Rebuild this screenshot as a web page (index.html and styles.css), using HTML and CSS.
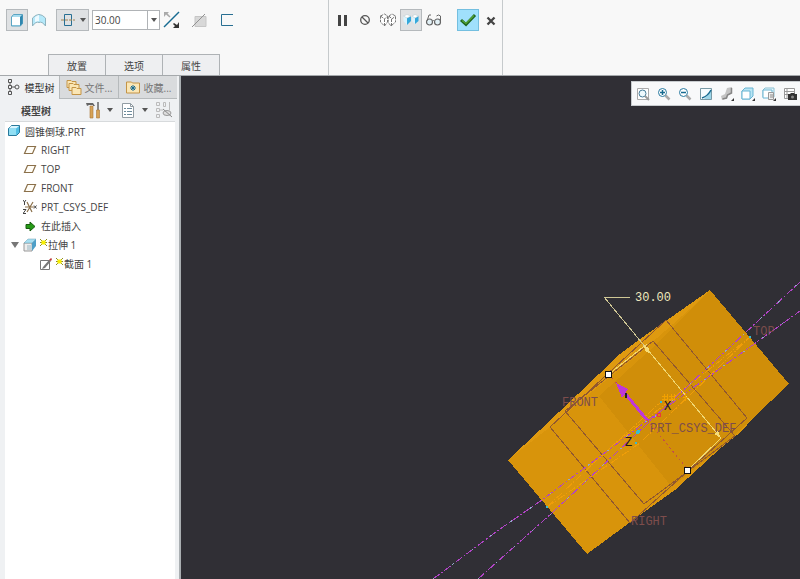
FILE: index.html
```html
<!DOCTYPE html>
<html lang="zh-CN">
<head>
    <meta charset="UTF-8">
    <meta name="viewport" content="width=device-width, initial-scale=1.0">
    <title>圆锥倒球.PRT</title>
    <link rel="stylesheet" href="styles.css">
</head>
<body>

<!-- Dashboard -->
<header class="dashboard">
    <div class="feature-panel">
        <div class="feature-tools">
            <button class="tool active" aria-label="Solid">
                <svg width="16" height="16" viewBox="0 0 16 16"><path d="M2.500 5l2-2.500h9v9l-2 2.500h-9z" fill="#a8dcef" stroke="#5ba4c2"/><path d="M3 5h8v8H3z" fill="#fff"/><path d="M11 5l2.500-2.500v9L11 14z" fill="#2f86ae"/></svg>
            </button>
            <button class="tool" aria-label="Surface">
                <svg width="16" height="16" viewBox="0 0 16 16"><path d="M1.500 6Q8-1 14.500 6v8Q11 9 8 10.500 5 9 1.500 14z" fill="#b5e9fa" stroke="#8fb3bf"/><path d="M4 5.500Q6 3 8 3v6Q6 9 4 10z" fill="#eefaff"/></svg>
            </button>
            <button class="tool split active" aria-label="Depth">
                <svg width="16" height="16" viewBox="0 0 16 16"><path d="M4.500 2.500h7v11h-7z" fill="none" stroke="#276f93"/><path d="M1 8h14" stroke="#a28554" stroke-dasharray="3 1"/></svg>
                <i class="caret"></i>
            </button>
            <div class="depth">
                <input class="depth-value" type="text" value="30.00" aria-label="Depth value">
                <button class="depth-drop" aria-label="Recent values"><i class="caret"></i></button>
            </div>
            <button class="tool" aria-label="Flip direction">
                <svg width="20" height="20" viewBox="0 0 20 20"><path d="M3 17L18 2" stroke="#176b91" stroke-width="1.500"/><path d="M3 7V2h5L6.500 3.500l3 3-1 1-3.500-3z" fill="#aaa"/><path d="M18 12v6h-6l2-2-2-2 1-1 3 2z" fill="#333"/></svg>
            </button>
            <button class="tool remove" aria-label="Remove material">
                <svg width="18" height="18" viewBox="0 0 18 18"><path d="M5 5.500h11v10H5z" fill="#d8d8d8" stroke="#c6c6c6"/><path d="M2 16L15 3" stroke="#929292"/></svg>
            </button>
            <button class="tool" aria-label="Thicken">
                <svg width="16" height="16" viewBox="0 0 16 16"><path d="M14 2.500H2.500v11H14" fill="none" stroke="#286f92"/></svg>
            </button>
        </div>
        <nav class="panel-tabs">
            <button class="panel-tab">放置</button>
            <button class="panel-tab">选项</button>
            <button class="panel-tab">属性</button>
        </nav>
    </div>
    <div class="run-panel">
        <button class="tool" aria-label="Pause">
            <svg width="16" height="16" viewBox="0 0 16 16"><path d="M4 3h3v11H4zM10 3h3v11h-3z" fill="#444"/></svg>
        </button>
        <button class="tool" aria-label="No preview">
            <svg width="16" height="16" viewBox="0 0 16 16"><circle cx="8" cy="8" r="4.300" fill="none" stroke="#555" stroke-width="1.300"/><path d="M5 5l6 6" stroke="#555" stroke-width="1.300"/></svg>
        </button>
        <button class="tool" aria-label="Unattached preview">
            <svg width="18" height="16" viewBox="0 0 18 16"><g fill="#fff" stroke="#777" stroke-dasharray="3 1"><path d="M1.500 4l4-2 3 2v6l-3 4-4-4z"/><path d="M1.500 4l4 3 3-3M5.500 7v7"/><path d="M10 4l3-2 3.500 2v6L12 14l-3-4zM10 4l3 3 3.500-3M12.500 7v7"/></g></svg>
        </button>
        <button class="tool active" aria-label="Attached preview">
            <svg width="18" height="16" viewBox="0 0 18 16"><path d="M1.500 4v5L5 13V6zM10 4v5l3 3V6z" fill="#d9f3fd"/><path d="M5 6l4-2v5l-4 4zM13 6l3.500-2v5L13 12z" fill="#35a8db"/><path d="M1.500 4L5 2.500 9 4 5 6zM10 4l3-1.500L16.500 4 13 6z" fill="#fff" stroke="#b5c6cd" stroke-width=".5"/></svg>
        </button>
        <button class="tool" aria-label="Verify">
            <svg width="18" height="16" viewBox="0 0 18 16"><g fill="#e2f1f7" stroke="#666" stroke-width="1.200"><circle cx="4.500" cy="10" r="3"/><circle cx="12.500" cy="10" r="3"/></g><path d="M2 9l2-6 2 0M7.500 9q1-1 2 0M15.500 10V4l-2-1-2 1" fill="none" stroke="#666"/></svg>
        </button>
        <button class="tool accept" aria-label="Accept">
            <svg width="18" height="18" viewBox="0 0 18 18"><path d="M2 9l5 4.500L16 4" fill="none" stroke="#1e651e" stroke-width="3"/><path d="M3 9.500l4 3L15 4.500" fill="none" stroke="#57a735" stroke-width="1.200"/></svg>
        </button>
        <button class="tool" aria-label="Cancel">
            <svg width="16" height="16" viewBox="0 0 16 16"><path d="M4.500 5.500l7 7M11.500 5.500l-7 7" stroke="#444" stroke-width="2.300"/></svg>
        </button>
    </div>
</header>

<main class="workspace">
    <!-- Model tree -->
    <aside class="navigator">
        <nav class="nav-tabs">
            <button class="nav-tab selected">
                <svg width="16" height="16" viewBox="0 0 16 16"><g fill="none" stroke="#555"><path d="M2.500 .5h3v3h-3zM2.500 6.500h3v3h-3zM2.500 12.500h3v3h-3zM5.500 8H9M4 3.500v3M4 9.500v3"/><circle cx="11" cy="8" r="2"/></g></svg>
                模型树
            </button>
            <button class="nav-tab">
                <svg width="16" height="16" viewBox="0 0 16 16"><g fill="#fae6b5" stroke="#c49446"><path d="M1 1.500h4l1 1h4v6H1z"/><path d="M3 4.500h4l1 1h5v6H3z"/><path d="M6 8.500h4l1 1h4v6H6z"/></g></svg>
                文件...
            </button>
            <button class="nav-tab">
                <svg width="16" height="16" viewBox="0 0 16 16"><path d="M1.500 3h5l1 1h7v10h-13z" fill="#fae6b5" stroke="#c49446"/><path d="M8 6v6M5 9h6M6 7l4 4M10 7l-4 4" stroke="#176b91"/></svg>
                收藏...
            </button>
        </nav>
        <div class="tree-bar">
            <h2 class="tree-title">模型树</h2>
            <button class="bar-tool" aria-label="Settings">
                <svg width="16" height="18" viewBox="0 0 16 18"><path d="M1 2h7l2 3H8V4H4L2 5z" fill="#666"/><path d="M5 5h3v12H5z" fill="#d7a357" stroke="#a87536" stroke-width=".6"/><path d="M12 1h2v8h-2z" fill="#888"/><path d="M11.500 9h3v8h-3z" fill="#d7a357" stroke="#a87536" stroke-width=".6"/></svg>
                <i class="caret"></i>
            </button>
            <button class="bar-tool" aria-label="Show">
                <svg width="16" height="18" viewBox="0 0 16 18"><path d="M2.500 2.500h8l3 3v11h-11z" fill="#fff" stroke="#919ca3"/><path d="M10.500 2.500v3h3" fill="none" stroke="#919ca3"/><path d="M4 7.500h2M7 7.500h5M4 10.500h2M7 10.500h5M4 13.500h2M7 13.500h5" stroke="#6c8b9c"/></svg>
                <i class="caret"></i>
            </button>
            <button class="bar-tool" aria-label="Tree filter">
                <svg width="18" height="18" viewBox="0 0 18 18"><g fill="none" stroke="#bbb"><path d="M1.500 1.500h3v3h-3zM1.500 7.500h3v3h-3zM1.500 13.500h3v3h-3zM5 9h3M8.500 1.500h2v4h-2zM14.500 1v8"/></g><ellipse cx="12" cy="12" rx="4" ry="2.500" fill="#ddd" stroke="#999"/><path d="M8 8l9 8" stroke="#888"/></svg>
            </button>
        </div>
        <ul class="tree">
            <li class="node root">
                <svg width="14" height="14" viewBox="0 0 14 14"><path d="M1.500 4.500l3-3h8v7l-3 3h-8z" fill="#52bfe5" stroke="#28789b"/><path d="M2 5h7v6H2z" fill="#91dff4"/><path d="M4 2h8L9 4.500H2z" fill="#d9f6ff"/></svg>
                圆锥倒球.PRT
            </li>
            <li class="node">
                <svg width="14" height="14" viewBox="0 0 14 14"><path d="M4.500 3.500h8l-3 7h-8z" fill="#fffdf7" stroke="#8b704a" stroke-width="1.200"/></svg>
                RIGHT
            </li>
            <li class="node">
                <svg width="14" height="14" viewBox="0 0 14 14"><path d="M4.500 3.500h8l-3 7h-8z" fill="#fffdf7" stroke="#8b704a" stroke-width="1.200"/></svg>
                TOP
            </li>
            <li class="node">
                <svg width="14" height="14" viewBox="0 0 14 14"><path d="M4.500 3.500h8l-3 7h-8z" fill="#fffdf7" stroke="#8b704a" stroke-width="1.200"/></svg>
                FRONT
            </li>
            <li class="node">
                <svg width="14" height="14" viewBox="0 0 14 14"><path d="M2 7h9M4 2l5 10M10 2L4 12" stroke="#8b704a" stroke-width="1.200"/><path d="M0 0l1.500 2L3 0M1.500 2v3M0 9.500h3l-3 4h3M11 5.500l2.500 3M13.500 5.500l-2.500 3" fill="none" stroke="#444"/></svg>
                PRT_CSYS_DEF
            </li>
            <li class="node">
                <svg width="14" height="14" viewBox="0 0 14 14"><path d="M3 5.500h4V3l5 4.500L7 12V9.500H3z" fill="#269b17" stroke="#175d0e"/></svg>
                在此插入
            </li>
            <li class="node feature">
                <button class="toggle" aria-label="Collapse"></button>
                <svg width="14" height="14" viewBox="0 0 14 14"><path d="M1 5h8v8H1z" fill="#eee" stroke="#999"/><path d="M1 5l4-4h8L9 5z" fill="#a7dff2" stroke="#6a9db0" stroke-width=".5"/><path d="M9 5l4-4v7l-4 5z" fill="#4d9fc8"/><path d="M4 7h5v5H4z" fill="#c3d2d8"/></svg>
                <svg class="regen" width="7" height="7" viewBox="0 0 7 7"><path d="M0 0l7 7M7 0L0 7M0 3.500h7" stroke="#8d8c22"/><path d="M1.500 1.500h4v4h-4z" fill="#f7ef00"/></svg>
                拉伸 1
            </li>
            <li class="node section">
                <svg width="14" height="14" viewBox="0 0 14 14"><path d="M1.500 3.500h9v9h-9z" fill="#fff" stroke="#777"/><path d="M4 10l6-7 2 1-6 7-3 1z" fill="#777"/><path d="M10 3l2-2 1 1-1 2z" fill="#bd3535"/></svg>
                <svg class="regen" width="7" height="7" viewBox="0 0 7 7"><path d="M0 0l7 7M7 0L0 7M0 3.500h7" stroke="#8d8c22"/><path d="M1.500 1.500h4v4h-4z" fill="#f7ef00"/></svg>
                截面 1
            </li>
        </ul>
    </aside>

    <!-- Graphics window -->
    <section class="viewport">
        <svg class="scene" viewBox="181 76 619 503" preserveAspectRatio="xMinYMin slice" shape-rendering="crispEdges">
            <path d="M508 460L540 430 578 394 620 354 640 339 710 290 789 384 752 419 700 467 675 490 640 515 587 554z" fill="#d8940b"/>
            <path d="M599 396L650 350 710 290 789 384 752 419 700 467 671 486z" fill="#d08e09"/>
            <path d="M508 460L540 430 578 394 620 354 640 339 710 290 690 309 640 353 599 386 550 427z" fill="#df9a10"/>
            <path d="M640 515L675 490 700 467 752 419 742 431 688 474 645 510z" fill="#db960d"/>
            <!-- datum planes -->
            <g class="datum">
                <path d="M666 320L747 418 630 523 550 427z"/>
                <path d="M653 341L735 436 644 504 565 411z"/>
            </g>
            <g class="hidden-edge">
                <path d="M547 507L610 448 750 337M547 507L640 443 750 337M590 466L661 402M690 395L750 337"/>
            </g>
            <g class="axis">
                <path d="M433 579L500 529 542 500 647 421 800 311"/>
                <path d="M478 579L552 513 648 423 800 282"/>
            </g>
            <g class="axis-dots">
                <path d="M433 579L500 529 542 500 647 421 800 311"/>
                <path d="M478 579L552 513 648 423 800 282"/>
            </g>
            <!-- labels -->
            <g class="datum-label">
                <text x="562" y="406">FRONT</text>
                <text x="753" y="335">TOP</text>
                <text x="631" y="525">RIGHT</text>
                <text x="650" y="432">PRT_CSYS_DEF</text>
            </g>
            <!-- depth dimension -->
            <path d="M630 297H604L647 349" fill="none" stroke="#cfc795"/>
            <path d="M647 349L721 438 688 470M609 374L647 344" fill="none" stroke="#f0d873"/>
            <path d="M644 345l5 3v5l-4-2zM721 438l-7-4 4-3z" fill="#f6dc79"/>
            <text class="dim-label" x="635" y="301">30.00</text>
            <path d="M609 374l39 47 40 49" fill="none" stroke="#c34f49" stroke-dasharray="2 3"/>
            <path d="M647 420L623 391" stroke="#bf38d8" stroke-width="3"/>
            <path d="M616 383l12 6-2 3-4 6z" fill="#bf38d8"/>
            <g fill="none" stroke="#f2a100">
                <path d="M664.500 394v7M667.500 394v7M671.500 394v7M674.500 394v7M662 396.500h6M669 396.500h6M662 399.500h6M669 399.500h6M685.500 393v8M683 397.500h5"/>
            </g>
            <text class="axis-label" x="664" y="410">X</text>
            <text class="axis-label" x="625" y="446">Z</text>
            <path d="M626 393v5" stroke="#222" stroke-width="2"/>
            <g fill="#38bbd2"><circle cx="638" cy="432" r="2"/><circle cx="636" cy="443" r="1"/><circle cx="661" cy="402" r="1"/><circle cx="750" cy="337" r="1"/><circle cx="547" cy="507" r="1"/></g>
            <circle cx="659" cy="415" r="2" fill="none" stroke="#ed3838"/>
            <g fill="#fff" stroke="#111"><path d="M605.500 371.500h6v6h-6zM684.500 467.500h6v6h-6z"/></g>
        </svg>
        <div class="view-tools">
            <button class="view-tool" aria-label="Refit"><svg width="16" height="16" viewBox="0 0 16 16"><path d="M2.500 2.500h11v11h-11z" fill="#fff" stroke="#aaa"/><circle cx="7.500" cy="7.500" r="3.500" fill="#eef9fd" stroke="#477d99"/><path d="M10 10l4 4" stroke="#999" stroke-width="2"/></svg></button>
            <button class="view-tool" aria-label="Zoom in"><svg width="16" height="16" viewBox="0 0 16 16"><circle cx="6.500" cy="6.500" r="4" fill="#fff" stroke="#287aa0"/><path d="M4 6.500h5M6.500 4v5" stroke="#176b91" stroke-width="1.500"/><path d="M9.500 9.500l4 4" stroke="#aaa" stroke-width="2.500"/></svg></button>
            <button class="view-tool" aria-label="Zoom out"><svg width="16" height="16" viewBox="0 0 16 16"><circle cx="6.500" cy="6.500" r="4" fill="#fff" stroke="#287aa0"/><path d="M4 6.500h5" stroke="#176b91" stroke-width="1.500"/><path d="M9.500 9.500l4 4" stroke="#aaa" stroke-width="2.500"/></svg></button>
            <button class="view-tool" aria-label="Repaint"><svg width="16" height="16" viewBox="0 0 16 16"><path d="M2.500 2.500h11v11h-11z" fill="#9bd5e8" stroke="#7899a5"/><path d="M3 3h10v2l-7 8H3z" fill="#f5fcff"/><path d="M13 4q-3 6-9 8" fill="none" stroke="#176b91" stroke-width="1.500"/></svg></button>
            <button class="view-tool" aria-label="Rendering"><svg width="16" height="16" viewBox="0 0 16 16"><path d="M8 2l5-1v6l-4 2-1 3-5 2-1-4 4-2z" fill="#c4c4c4"/><path d="M12.500 2v5l-4 2-1 3-4 1" fill="none" stroke="#858585" stroke-width="1.500"/><path d="M15 12v3h-3z" fill="#333"/></svg></button>
            <button class="view-tool" aria-label="Display style"><svg width="16" height="16" viewBox="0 0 16 16"><path d="M2 5l3-3h8v8l-3 3H2z" fill="#b9e5f4" stroke="#68b5d3"/><path d="M2 5h8v8H2z" fill="#fff" stroke="#68b5d3"/><path d="M15 12v3h-3z" fill="#333"/></svg></button>
            <button class="view-tool" aria-label="Saved orientations"><svg width="16" height="16" viewBox="0 0 16 16"><path d="M2 4l2-2h9v9H2z" fill="#e4f6fc" stroke="#8abfd2"/><path d="M2 4h9v8H2z" fill="#fff" stroke="#68b5d3"/><path d="M7.500 6.500h5v7h-5z" fill="#eee" stroke="#999"/><path d="M9 9h3M9 11h3" stroke="#888"/><path d="M15 12v3h-3z" fill="#333"/></svg></button>
            <button class="view-tool" aria-label="View manager"><svg width="16" height="16" viewBox="0 0 16 16"><path d="M2.500 2.500h10v10h-10zM5 3v9M2 5.500h10M2 8.500h10" fill="#fff" stroke="#999"/><path d="M6 8h2l1-1h3l1 1h2v6H6z" fill="#333"/><circle cx="10.500" cy="11" r="1.500" fill="#888"/></svg></button>
        </div>
    </section>
</main>

</body>
</html>
```
FILE: styles.css
```css
* {
    box-sizing: border-box;
}
body {
    display: flex;
    flex-direction: column;
    min-height: 100vh;
    margin: 0;
    font-family: "Open Sans", "Noto Sans CJK SC", sans-serif;
    font-size: 10px;
    color: #444;
    background: #f0f1f2;
}
button {
    display: flex;
    align-items: center;
    justify-content: center;
    padding: 0;
    border: 0;
    background: none;
    font: inherit;
    color: inherit;
}
svg {
    flex: none;
}
.caret {
    border: 3px solid transparent;
    border-top: 4px solid #555;
    border-bottom: 0;
}

/* Dashboard */
.dashboard {
    display: flex;
    height: 76px;
    background: #f8f8f8;
    border-bottom: 1px solid #a5a9ac;
}
.feature-panel {
    display: flex;
    flex-direction: column;
    justify-content: space-between;
    width: 328px;
    padding: 9px 0 0 6px;
}
.feature-tools {
    display: flex;
}
.tool {
    width: 22px;
    height: 22px;
}
.tool.active {
    background: #dfe1e3;
    border: 1px solid #b5b9bc;
}
.tool.split {
    width: 33px;
    margin-left: 6px;
    gap: 4px;
}
.remove {
    margin: 0 6px;
}
.depth {
    display: flex;
    width: 68px;
    height: 20px;
    margin: 1px 0 0 3px;
    border: 1px solid #b0b3b6;
    background: #fff;
}
.depth-value {
    flex: 1;
    min-width: 0;
    padding: 0 2px;
    border: 0;
    font: inherit;
    color: #444;
}
.depth-drop {
    width: 12px;
    border-left: 1px solid #b0b3b6;
}
.panel-tabs {
    display: flex;
    padding-left: 42px;
}
.panel-tab {
    width: 58px;
    height: 21px;
    margin-right: -1px;
    border: 1px solid #aeb2b5;
    border-bottom: 0;
    background: #eeeff1;
}
.run-panel {
    display: flex;
    width: 175px;
    padding: 9px 0 0 2px;
    gap: 1px;
    border: 1px solid #c6cacc;
    border-width: 0 1px;
}
.tool.accept {
    margin-left: 11px;
    background: #a0e0fc;
    border: 1px solid #74bfe0;
}

/* Model tree */
.workspace {
    display: flex;
    flex: 1;
}
.navigator {
    display: flex;
    flex-direction: column;
    width: 181px;
    padding-right: 2px;
    border-right: 2px solid #a9aeb1;
    background: #eff1f3;
}
.nav-tabs {
    display: flex;
    height: 23px;
}
.nav-tab {
    flex: 1;
    gap: 3px;
    background: #d9dbdd;
    border: 1px solid #b6babc;
    border-width: 0 0 1px 1px;
    color: #777;
}
.nav-tab.selected {
    background: none;
    border-color: transparent;
    color: #333;
}
.tree-bar {
    display: flex;
    align-items: center;
    height: 22px;
    padding-left: 21px;
    gap: 7px;
}
.tree-title {
    width: 57px;
    margin: 0;
    font-size: 10px;
    font-weight: bold;
}
.bar-tool {
    gap: 6px;
}
.tree {
    flex: 1;
    margin: 0 2px 0 5px;
    padding: 0;
    list-style: none;
    background: #fff;
    border-top: 1px solid #d7dadc;
}
.node {
    display: flex;
    align-items: center;
    height: 19px;
    padding-left: 18px;
    gap: 4px;
    white-space: nowrap;
}
.node.root {
    height: 18px;
    padding-left: 2px;
}
.node.feature {
    padding-left: 6px;
}
.node.section {
    padding-left: 34px;
}
.toggle {
    border: 4px solid transparent;
    border-top: 6px solid #777;
    border-bottom: 0;
}
.regen {
    align-self: flex-start;
    margin: 4px -3px 0 -1px;
}

/* Graphics window */
.viewport {
    position: relative;
    flex: 1;
    background: #302f35;
}
.scene {
    position: absolute;
    width: 100%;
    height: 100%;
}
.datum {
    fill: none;
    stroke: #91582f;
}
.hidden-edge {
    fill: none;
    stroke: #ef9d08;
    stroke-dasharray: 8 2 1 2;
}
.axis {
    fill: none;
    stroke: #b044c5;
    stroke-dasharray: 8 2 2 2;
}
.axis-dots {
    fill: none;
    stroke: #95a6cb;
    stroke-dasharray: 2 22;
}
.datum-label {
    font: 12px "Liberation Mono", monospace;
    fill: #7d4d4c;
}
.dim-label {
    font: 12px "Liberation Mono", monospace;
    fill: #eee9bd;
}
.axis-label {
    font: 12px "Liberation Mono", monospace;
    fill: #221b13;
}
.view-tools {
    position: absolute;
    top: 5px;
    right: 0;
    display: flex;
    align-items: center;
    width: 169px;
    height: 25px;
    padding-left: 3px;
    gap: 5px;
    background: #f8f9fa;
    border: 1px solid #c8cccf;
    border-right: 0;
}
```
